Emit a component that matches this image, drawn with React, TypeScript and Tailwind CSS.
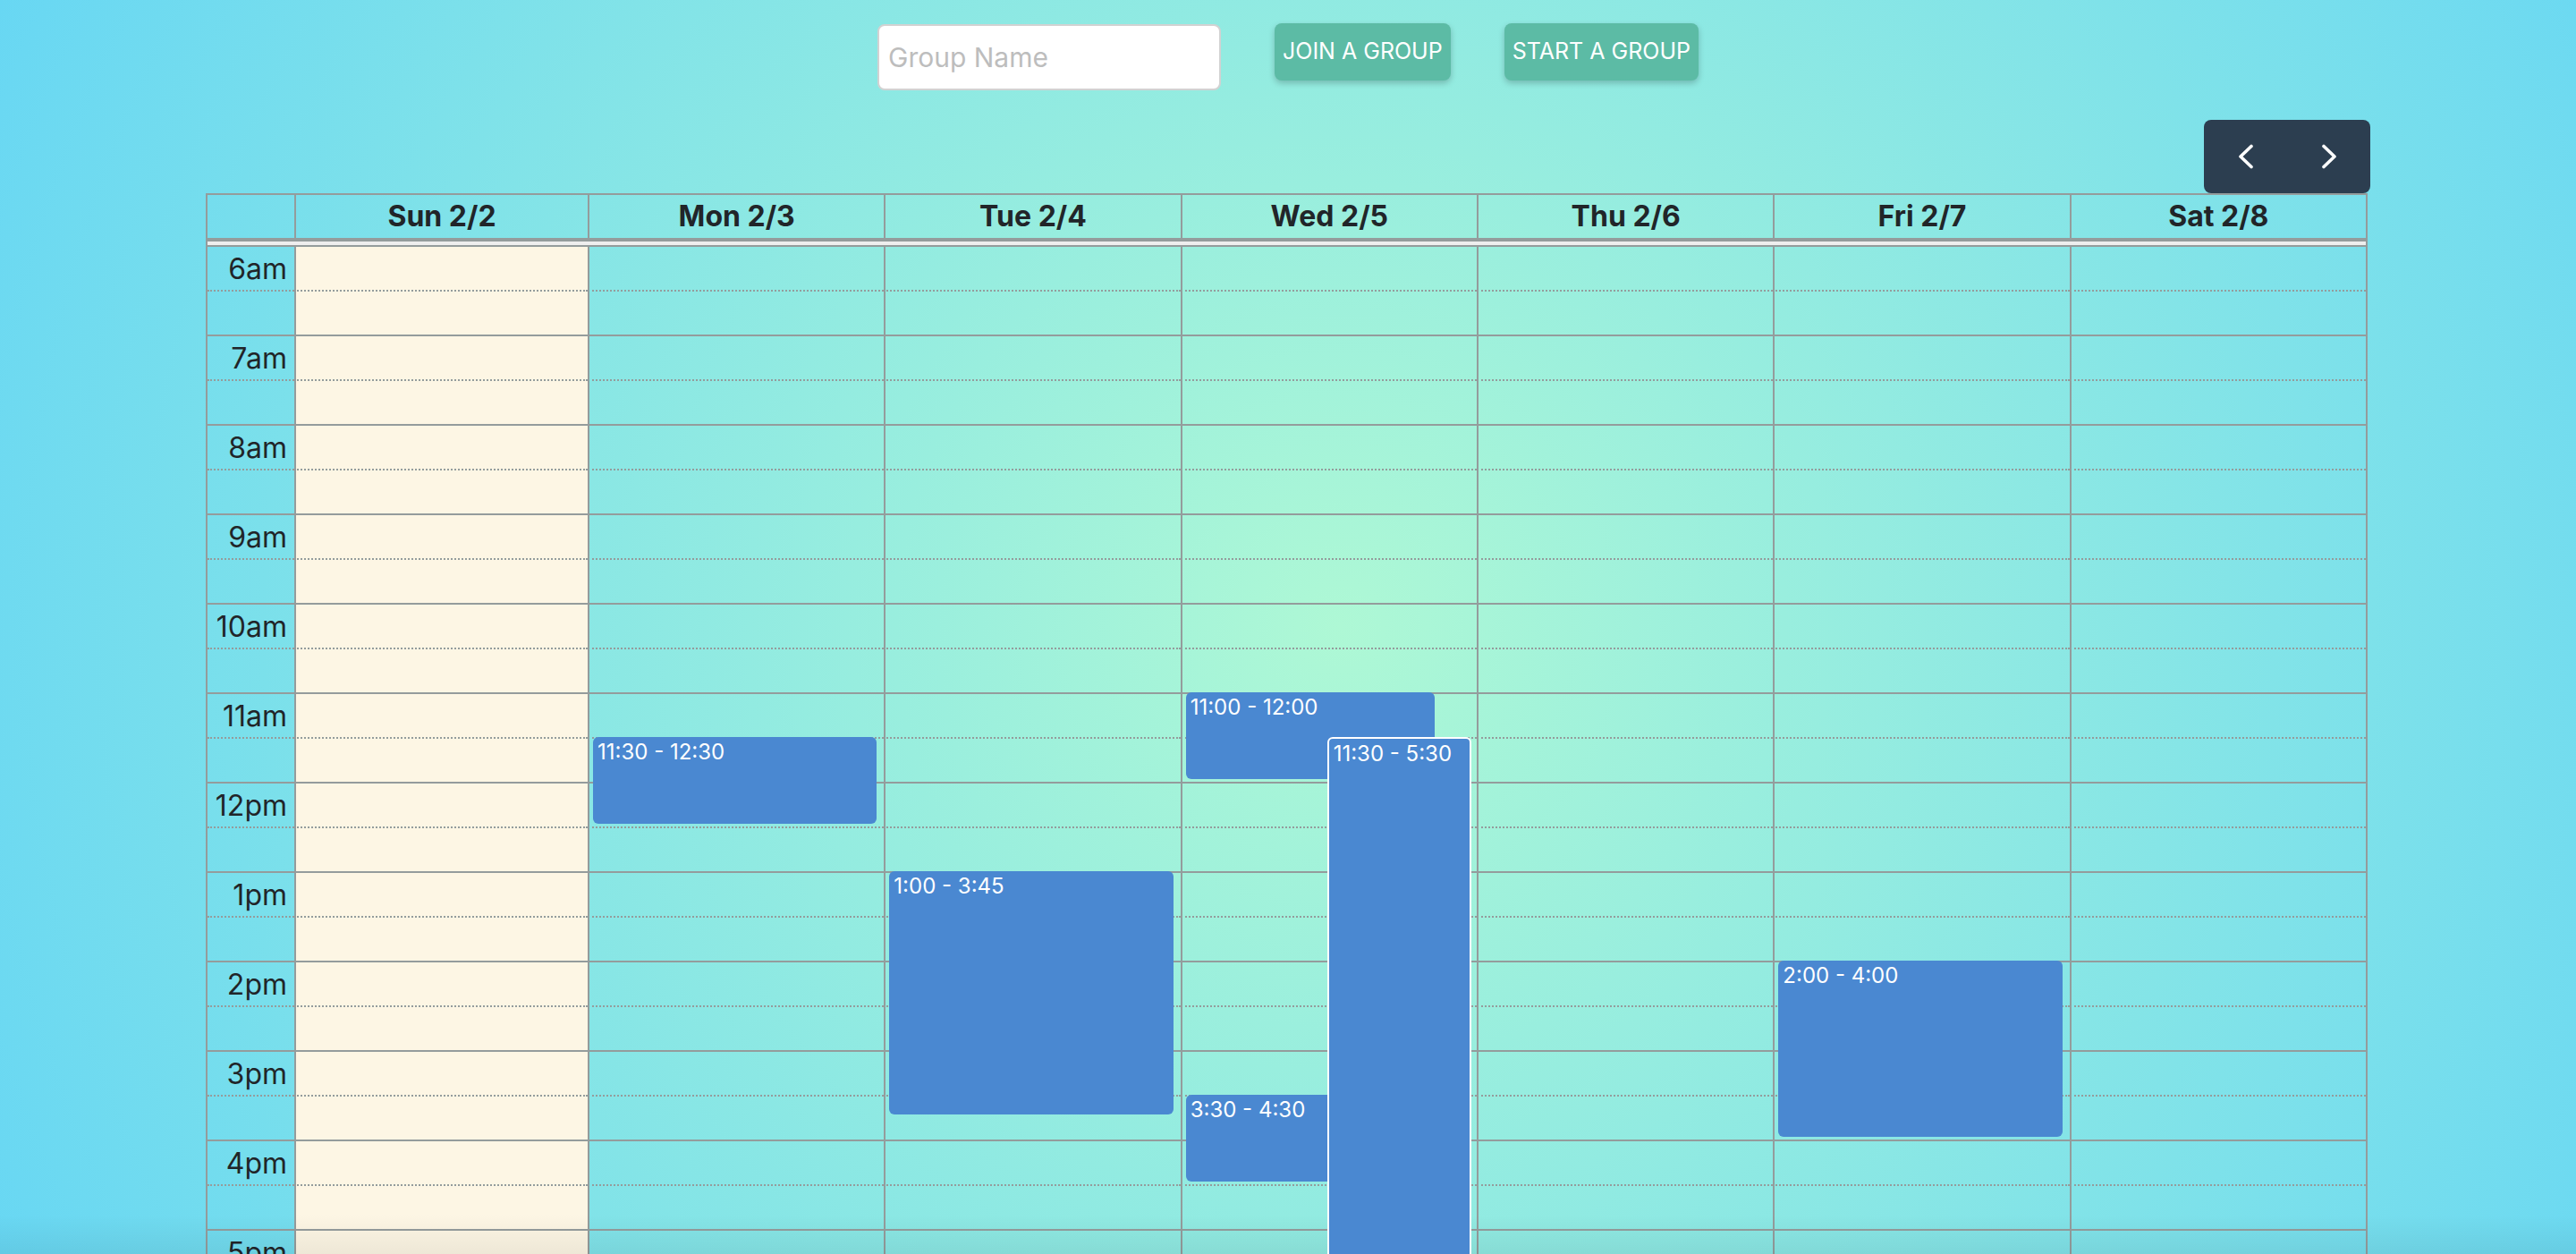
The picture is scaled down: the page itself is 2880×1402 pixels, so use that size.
import { Fragment } from "react";

const DAYS = ["Sun 2/2", "Mon 2/3", "Tue 2/4", "Wed 2/5", "Thu 2/6", "Fri 2/7", "Sat 2/8"];

const HOURS = [
  "6am", "7am", "8am", "9am", "10am", "11am", "12pm", "1pm", "2pm",
  "3pm", "4pm", "5pm", "6pm", "7pm", "8pm", "9pm", "10pm", "11pm",
];

type CalEvent = {
  day: number;
  start: number;
  end: number;
  label: string;
  place: string;
};

// hours are decimal, 24h clock
const EVENTS: CalEvent[] = [
  { day: 1, start: 11.5, end: 12.5, label: "11:30 - 12:30", place: "left-[6px] right-[8px]" },
  { day: 2, start: 13, end: 15.75, label: "1:00 - 3:45", place: "left-[6px] right-[8px]" },
  { day: 3, start: 11, end: 12, label: "11:00 - 12:00", place: "left-[6px] w-[278px]" },
  { day: 3, start: 15.5, end: 16.5, label: "3:30 - 4:30", place: "left-[6px] w-[278px]" },
  { day: 3, start: 11.5, end: 17.5, label: "11:30 - 5:30", place: "left-[164px] right-[6px] z-10 border-2 border-white" },
  { day: 5, start: 14, end: 16, label: "2:00 - 4:00", place: "left-[6px] right-[8px]" },
];

function Chevron({ dir }: { dir: "left" | "right" }) {
  return (
    <svg width="18" height="28" viewBox="0 0 18 28" fill="none" stroke="white" strokeWidth="3.6" strokeLinecap="round" strokeLinejoin="round">
      {dir === "left" ? <polyline points="15,2.5 3,14 15,25.5" /> : <polyline points="3,2.5 15,14 3,25.5" />}
    </svg>
  );
}

export default function App() {
  const rows = HOURS.flatMap((h) => [h, ""]);

  return (
    <main className="relative h-screen overflow-hidden bg-[radial-gradient(circle_at_52%_50%,#aef8d5_0%,#68d7f3_100%)] font-['Inter','Noto_Sans',sans-serif] text-[#212529]">
      {/* ── Group controls ── */}
      <div className="flex items-start justify-center gap-[60px] pt-[26px]">
        <input
          placeholder="Group Name"
          className="mt-px h-[74px] w-[384px] rounded-[8px] border-2 border-[#d2d2d2] bg-white pl-[10px] text-[30px] outline-none placeholder:text-[#bdbdbd]"
        />
        <button className="h-[64px] rounded-[8px] bg-[#5cbba5] px-[9px] text-[25px] text-white uppercase shadow-[0_3px_7px_rgba(0,0,0,0.22)]">
          Join a group
        </button>
        <button className="h-[64px] rounded-[8px] bg-[#5cbba5] px-[9px] text-[25px] text-white uppercase shadow-[0_3px_7px_rgba(0,0,0,0.22)]">
          Start a group
        </button>
      </div>

      <div className="mx-auto mt-[33px] w-[2420px]">
        {/* ── Toolbar ── */}
        <div className="flex justify-end">
          <div className="flex h-[82px] overflow-hidden rounded-[8px] bg-[#2c3e50]">
            <button className="flex w-[93px] items-center justify-center">
              <Chevron dir="left" />
            </button>
            <button className="flex w-[93px] items-center justify-center">
              <Chevron dir="right" />
            </button>
          </div>
        </div>

        {/* ── Week grid ── */}
        <div className="mr-[3px] border-x-2 border-t-2 border-[#949c9c]">
          <div className="grid grid-cols-[97px_328px_repeat(6,minmax(0,1fr))] border-b-2 border-[#949c9c]">
            <div className="h-[48px]" />
            {DAYS.map((d) => (
              <div key={d} className="flex h-[48px] items-center justify-center border-l-2 border-[#949c9c] text-[32px] font-bold">
                {d}
              </div>
            ))}
          </div>
          <div className="h-[8px] border-y-2 border-[#949c9c] bg-[#eeeeee]" />

          <div className="relative">
            <div className="grid grid-cols-[97px_328px_repeat(6,minmax(0,1fr))]">
              {rows.map((label, i) => (
                <Fragment key={i}>
                  <div
                    className={
                      i % 2 === 0
                        ? "h-[50px] border-b-2 border-[#949c9c] pt-px pr-[8px] text-right text-[32px] leading-[48px] [border-bottom-style:dotted]"
                        : "h-[50px] border-b-2 border-[#949c9c]"
                    }
                  >
                    {label}
                  </div>
                  {DAYS.map((d, j) => (
                    <div
                      key={d}
                      className={
                        (i % 2 === 0
                          ? "h-[50px] border-b-2 border-l-2 border-[#949c9c] [border-bottom-style:dotted] "
                          : "h-[50px] border-b-2 border-l-2 border-[#949c9c] ") + (j === 0 ? "bg-[#fdf6e4]" : "")
                      }
                    />
                  ))}
                </Fragment>
              ))}
            </div>

            {/* events layer */}
            <div className="pointer-events-none absolute inset-0 grid grid-cols-[97px_328px_repeat(6,minmax(0,1fr))]">
              <div />
              {DAYS.map((d, j) => (
                <div key={d} className="relative">
                  {EVENTS.filter((e) => e.day === j).map((e) => (
                    <div
                      key={e.label}
                      className={"absolute rounded-[6px] bg-[#4a88d1] px-[5px] pt-[3px] text-[24px] leading-[1.2] text-white " + e.place}
                      style={{ top: (e.start - 6) * 100 - 2, height: (e.end - e.start) * 100 - 3 }}
                    >
                      {e.label}
                    </div>
                  ))}
                </div>
              ))}
            </div>
          </div>
        </div>
      </div>

      <div className="pointer-events-none absolute inset-x-0 bottom-0 h-[44px] bg-linear-to-b from-transparent to-black/[0.06]" />
    </main>
  );
}
